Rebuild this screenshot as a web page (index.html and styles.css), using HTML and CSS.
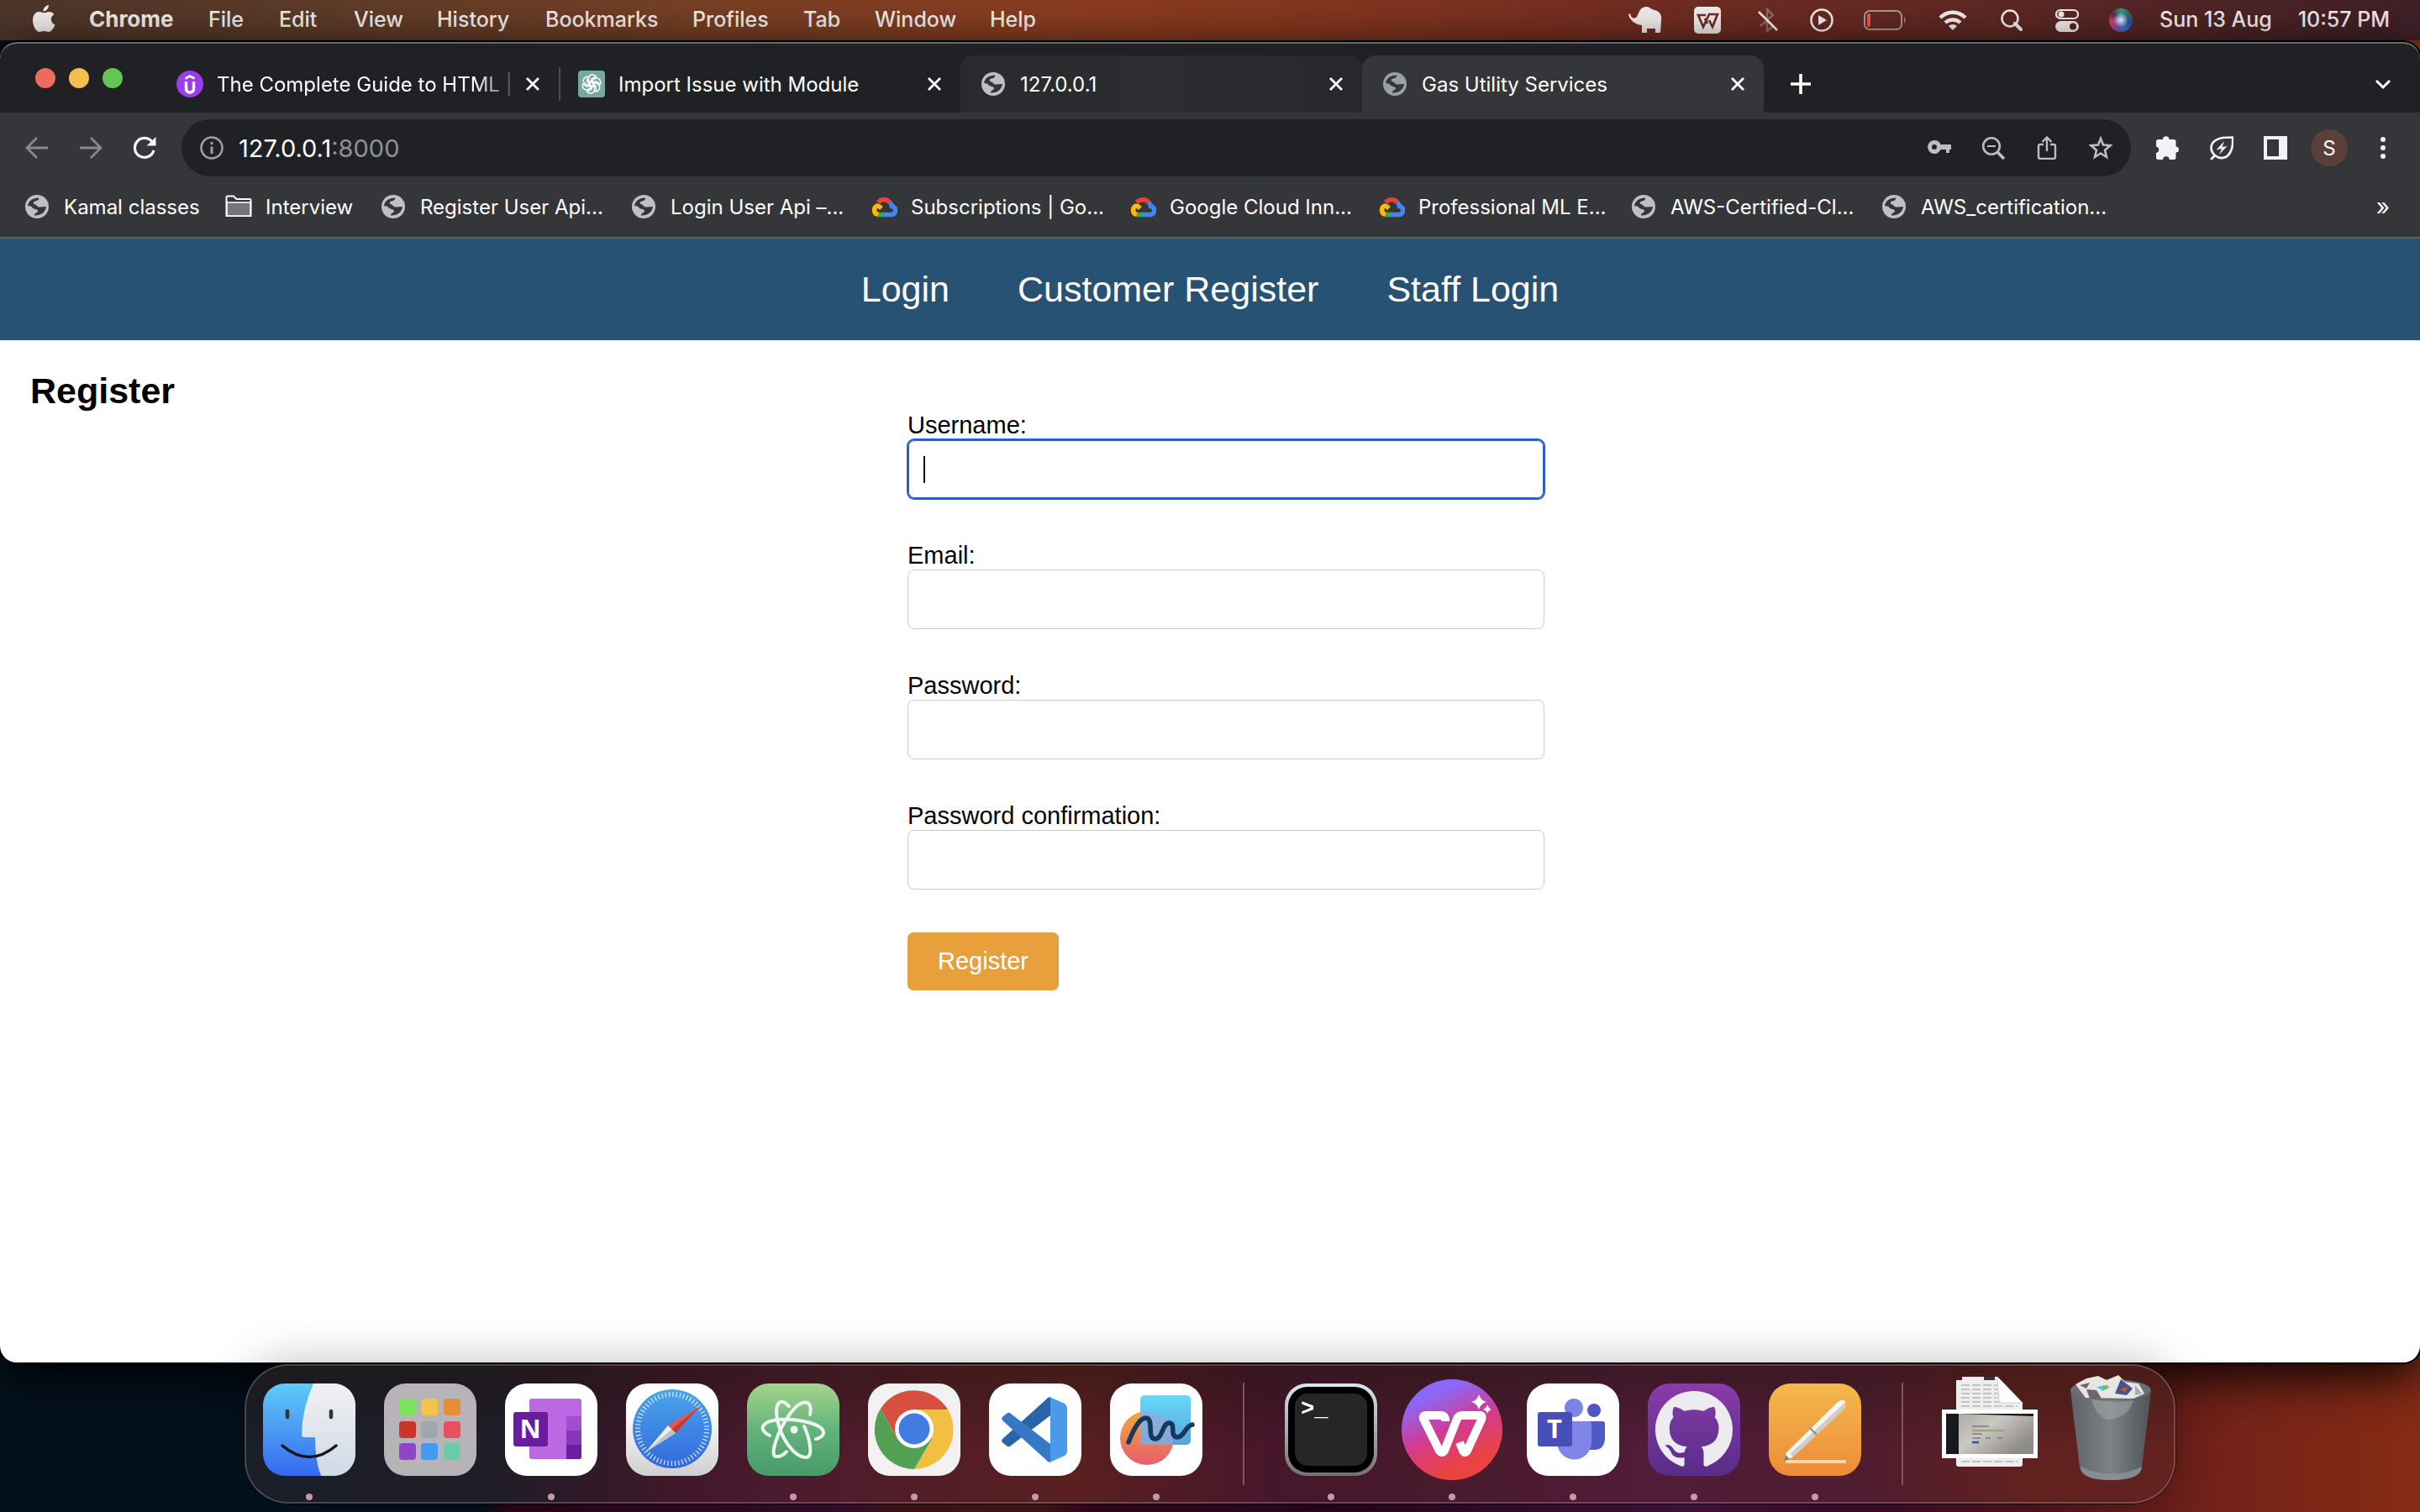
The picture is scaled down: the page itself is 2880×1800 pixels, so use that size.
FILE: index.html
```html
<!DOCTYPE html>
<html lang="en">
<head>
<meta charset="utf-8">
<title>Gas Utility Services</title>
<link rel="stylesheet" href="styles.css">
</head>
<body class="desktop">
<svg class="defs" width="0" height="0" aria-hidden="true">
  <defs>
    <symbol id="globe" viewBox="0 0 28 28">
      <circle cx="14" cy="14" r="14" fill="currentColor"/>
      <path class="globe-sea" d="M3 13C4 7 9 3.500 16 3.500C17 5 15 7 12 7.500C9 8 9 11 12 11.500C14 12 14 14.500 17 14.500L25 14C24.500 20 19 25 11 24.500C10.500 21.500 15 21.500 15 19C15 16.500 9 17.500 8 14.500C7 13 5 14 3 13Z"/>
    </symbol>
    <symbol id="cloud" viewBox="0 0 32 26">
      <path d="M9 8A9 9 0 0 1 23 8" fill="none" stroke="#ea4335" stroke-width="5.500"/>
      <path d="M23 8C25 10 25.500 11 25.500 12.500A5 5 0 0 1 24 22.500H16" fill="none" stroke="#4285f4" stroke-width="5.500"/>
      <path d="M16 22.500H9" fill="none" stroke="#34a853" stroke-width="5.500"/>
      <path d="M9 22.500A5.500 5.500 0 0 1 8 12C10 12 11 13 13 15" fill="none" stroke="#fbbc05" stroke-width="5.500"/>
    </symbol>
    <symbol id="close" viewBox="0 0 24 24">
      <path d="M5 5L19 19M19 5L5 19" stroke="currentColor" stroke-width="2.800" fill="none"/>
    </symbol>
  </defs>
</svg>

<header class="menubar">
  <svg class="apple" viewBox="0 0 28 34"><path fill="currentColor" d="M20 1C20 5 17 8.500 13.500 8.500C13 5 16.500 1.500 20 1ZM20.500 9C22.500 9 25 10 26.500 12C21 15.500 22 22 27.500 24.500C26 28.500 23 33 20 33C18 33 17 32 14.500 32C12 32 11 33 9 33C5 33 1 26 1 19C1 12 5 9 9 9C11.500 9 13 10.300 14.500 10.300C16 10.300 18 9 20.500 9Z"/></svg>
  <nav class="menus" aria-label="Menu bar">
    <b class="appname">Chrome</b><span>File</span><span>Edit</span><span>View</span><span>History</span><span>Bookmarks</span><span>Profiles</span><span>Tab</span><span>Window</span><span>Help</span>
  </nav>
  <div class="status">
    <svg width="40" height="32" viewBox="0 0 40 32"><path fill="currentColor" d="M0 9L2 8C3 14 7 15 10 12C12 9 13 0 21 0C25 0 27 3 31 4C37 5 40 10 39 16L38 31H32V26H22V31H16V22C7 21 1 15 0 9Z"/></svg>
    <svg width="32" height="32" viewBox="0 0 32 32"><rect width="32" height="32" rx="5" fill="currentColor"/><path d="M14 10H5L11 24L18 9H28L22 24L18 16M13 14L16 20" fill="none" stroke="#6d2b20" stroke-width="2.600"/></svg>
    <svg width="24" height="30" viewBox="0 0 24 30"><path d="M3 22L18 9L11 2V28L18 22L13 17" fill="none" stroke="currentColor" opacity=".3" stroke-width="2.500"/><path d="M1 5L23 27" stroke="currentColor" stroke-width="2.500"/></svg>
    <svg width="28" height="28" viewBox="0 0 28 28"><circle cx="14" cy="14" r="12.500" fill="none" stroke="currentColor" stroke-width="2.600"/><path d="M10 8L20 14L10 20Z" fill="currentColor"/></svg>
    <svg width="52" height="24" viewBox="0 0 52 24"><rect x="1" y="1" width="44" height="22" rx="6" fill="none" stroke="currentColor" opacity=".55" stroke-width="2"/><rect x="4" y="4" width="4" height="16" rx="2" fill="#ee5b4b"/><path d="M48 8Q51 12 48 16Z" fill="currentColor" opacity=".55"/></svg>
    <svg width="34" height="26" viewBox="0 0 34 26"><g fill="none" stroke="currentColor" stroke-width="4.500"><path d="M2 10A21 21 0 0 1 32 10"/><path d="M8 16A13 13 0 0 1 26 16"/></g><path d="M12 20A7 7 0 0 1 22 20L17 25Z" fill="currentColor"/></svg>
    <svg width="26" height="26" viewBox="0 0 26 26"><circle cx="11" cy="11" r="9.500" fill="none" stroke="currentColor" stroke-width="2.500"/><path d="M17 17L24 24" stroke="currentColor" stroke-width="4" stroke-linecap="round"/></svg>
    <svg width="28" height="28" viewBox="0 0 28 28"><rect x="1" y="2" width="26" height="10" rx="5" fill="none" stroke="currentColor" stroke-width="2.200"/><circle cx="7" cy="7" r="3.500" fill="currentColor"/><rect y="15" width="28" height="13" rx="6.500" fill="currentColor"/><circle cx="21" cy="21.500" r="4" fill="#552527"/></svg>
    <span class="siri"></span>
    <time class="clock"><span>Sun 13 Aug</span><span>10:57 PM</span></time>
  </div>
</header>

<section class="window">
  <div class="tabstrip">
    <div class="lights"><i class="light red"></i><i class="light amber"></i><i class="light green"></i></div>
    <div class="tab">
      <svg class="favicon" viewBox="0 0 32 32"><circle cx="16" cy="16" r="16" fill="#9b3dea"/><path d="M10.500 9.500L16 6.500L21.500 9.500" fill="none" stroke="#fff" stroke-width="2.800"/><path d="M11.500 13V21Q11.500 26 16 26Q20.500 26 20.500 21V13" fill="none" stroke="#fff" stroke-width="3.400"/></svg>
      <span class="tab-title fade">The Complete Guide to HTML |</span>
      <button class="icon-button close" aria-label="Close tab"><svg><use href="#close"/></svg></button>
    </div>
    <div class="tab divided">
      <svg class="favicon" viewBox="0 0 32 32"><rect width="32" height="32" rx="4" fill="#75a99c"/><g fill="none" stroke="#fff" stroke-width="1.500" stroke-linejoin="round"><path id="petal" d="M16 19.500L12.500 17.500V9.500Q13 5 17 5Q20 5 21.500 7L16 10V15"/><use href="#petal" transform="rotate(60 16 16)"/><use href="#petal" transform="rotate(120 16 16)"/><use href="#petal" transform="rotate(180 16 16)"/><use href="#petal" transform="rotate(240 16 16)"/><use href="#petal" transform="rotate(300 16 16)"/></g></svg>
      <span class="tab-title">Import Issue with Module</span>
      <button class="icon-button close" aria-label="Close tab"><svg><use href="#close"/></svg></button>
    </div>
    <div class="tab hovered">
      <svg class="favicon globe"><use href="#globe"/></svg>
      <span class="tab-title">127.0.0.1</span>
      <button class="icon-button close" aria-label="Close tab"><svg><use href="#close"/></svg></button>
    </div>
    <div class="tab active">
      <svg class="favicon globe muted"><use href="#globe"/></svg>
      <span class="tab-title">Gas Utility Services</span>
      <button class="icon-button close" aria-label="Close tab"><svg><use href="#close"/></svg></button>
    </div>
    <button class="icon-button newtab" aria-label="New tab"><svg viewBox="0 0 24 24"><path d="M12 0V24M0 12H24" stroke="currentColor" stroke-width="3.600"/></svg></button>
    <button class="icon-button tabsearch" aria-label="Search tabs"><svg viewBox="0 0 24 24"><path d="M4 8L12 16L20 8" fill="none" stroke="currentColor" stroke-width="3"/></svg></button>
  </div>

  <div class="toolbar">
    <button class="icon-button tool dim" aria-label="Back"><svg viewBox="0 0 28 28"><path d="M27 14H3M14 2L2 14L14 26" fill="none" stroke="currentColor" stroke-width="2.800"/></svg></button>
    <button class="icon-button tool dim" aria-label="Forward"><svg viewBox="0 0 28 28"><path d="M1 14H25M14 2L26 14L14 26" fill="none" stroke="currentColor" stroke-width="2.800"/></svg></button>
    <button class="icon-button tool" aria-label="Reload"><svg viewBox="0 0 28 28"><path d="M23.500 7.500A11.500 11.500 0 1 0 25 17" fill="none" stroke="currentColor" stroke-width="3.200"/><path d="M27.500 1V11.500H16.500Z" fill="currentColor"/></svg></button>
    <div class="omnibox">
      <svg class="info" viewBox="0 0 28 28"><circle cx="14" cy="14" r="12.500" fill="none" stroke="currentColor" stroke-width="2.600"/><path d="M14 12.500V21M14 7V10" stroke="currentColor" stroke-width="3"/></svg>
      <span class="url">127.0.0.1<span class="port">:8000</span></span>
      <button class="icon-button tool soft" aria-label="Passwords"><svg viewBox="0 0 28 28"><path fill="currentColor" fill-rule="evenodd" d="M8 5A8 8 0 1 0 15.500 16H22V20H26V16H28V10H15.500A8 8 0 0 0 8 5ZM8 10A3 3 0 1 1 8 16A3 3 0 1 1 8 10Z"/></svg></button>
      <button class="icon-button tool soft" aria-label="Zoom"><svg viewBox="0 0 28 28"><circle cx="12" cy="12" r="9.800" fill="none" stroke="currentColor" stroke-width="2.600"/><path d="M7 12H17" stroke="currentColor" stroke-width="2"/><path d="M19 19L27 27" stroke="currentColor" stroke-width="3.600"/></svg></button>
      <button class="icon-button tool soft" aria-label="Share"><svg viewBox="0 0 28 28"><path d="M10 10H6Q4 10 4 12V25Q4 27 6 27H22Q24 27 24 25V12Q24 10 22 10H18M14 18V2M8.500 7L14 1.500L19.500 7" fill="none" stroke="currentColor" stroke-width="2.400"/></svg></button>
      <button class="icon-button tool soft" aria-label="Bookmark this page"><svg viewBox="0 0 28 28"><path d="M14 3L17 10.500L25.500 11.200L19 16.700L21 25L14 20.500L7 25L9 16.700L2.500 11.200L11 10.500Z" fill="none" stroke="currentColor" stroke-width="2.600"/></svg></button>
    </div>
    <button class="icon-button tool" aria-label="Extensions"><svg viewBox="0 0 28 28"><path fill="currentColor" d="M8 4A3.500 3.500 0 0 1 15.500 4H21Q23.500 4 23.500 6.500V12.500A3.500 3.500 0 0 1 23.500 19.500V25.500Q23.500 28 21 28H15.700A3.800 3.800 0 0 0 8 28H2.500Q0 28 0 25.500V20A3.800 3.800 0 0 0 0 12.500V6.500Q0 4 2.500 4Z"/></svg></button>
    <button class="icon-button tool" aria-label="Energy saver"><svg viewBox="0 0 28 28"><path d="M27 1.500Q28 13 24 19.500C20 27 12 28 6 23C0 18 0 10 6 5.500C11 1.500 18 1.500 27 1.500ZM6 23L1 28" fill="none" stroke="currentColor" stroke-width="2.700"/><path d="M17 6L7.500 16.500L14 15L11 22L20.500 12L14.500 13Z" fill="currentColor"/></svg></button>
    <button class="icon-button tool" aria-label="Side panel"><svg viewBox="0 0 28 28"><path fill="currentColor" fill-rule="evenodd" d="M0 0H28V28H0ZM4 4V24H18V4Z"/></svg></button>
    <button class="icon-button tool" aria-label="Profile"><span class="avatar">S</span></button>
    <button class="icon-button tool" aria-label="Chrome menu"><svg viewBox="0 0 28 28"><g fill="currentColor"><circle cx="14" cy="4" r="3"/><circle cx="14" cy="14" r="3"/><circle cx="14" cy="24" r="3"/></g></svg></button>
  </div>

  <nav class="bookmarks" aria-label="Bookmarks">
    <a href="#"><svg class="bm globe"><use href="#globe"/></svg>Kamal classes</a>
    <a href="#"><svg class="bm" viewBox="0 0 32 28"><path d="M1.500 25V3Q1.500 1.500 3 1.500H10L13.500 5H29Q30.500 5 30.500 6.500V25Z" fill="none" stroke="#fff" stroke-width="2"/><rect x="2" y="9" width="28" height="16" fill="#75767a" stroke="#fff" stroke-width="1.500"/></svg>Interview</a>
    <a href="#"><svg class="bm globe"><use href="#globe"/></svg>Register User Api...</a>
    <a href="#"><svg class="bm globe"><use href="#globe"/></svg>Login User Api –...</a>
    <a href="#"><svg class="bm"><use href="#cloud"/></svg>Subscriptions | Go...</a>
    <a href="#"><svg class="bm"><use href="#cloud"/></svg>Google Cloud Inn...</a>
    <a href="#"><svg class="bm"><use href="#cloud"/></svg>Professional ML E...</a>
    <a href="#"><svg class="bm globe"><use href="#globe"/></svg>AWS-Certified-Cl...</a>
    <a href="#"><svg class="bm globe"><use href="#globe"/></svg>AWS_certification...</a>
    <button class="icon-button more" aria-label="More bookmarks">»</button>
  </nav>

  <main class="page">
    <nav class="sitenav" aria-label="Site">
      <a href="#">Login</a>
      <a href="#">Customer Register</a>
      <a href="#">Staff Login</a>
    </nav>
    <div class="content">
      <h2 class="heading">Register</h2>
      <form class="form">
        <div class="field"><label for="username">Username:</label><div class="caret-box"><input class="focused" id="username" type="text"><i class="caret"></i></div></div>
        <div class="field"><label for="email">Email:</label><input id="email" type="email"></div>
        <div class="field"><label for="password1">Password:</label><input id="password1" type="password"></div>
        <div class="field"><label for="password2">Password confirmation:</label><input id="password2" type="password"></div>
        <button class="submit" type="button">Register</button>
      </form>
    </div>
  </main>
</section>

<footer class="dock">
  <div class="app running">
    <svg viewBox="0 0 110 110"><defs><linearGradient id="finderBlue" x2="0" y2="1"><stop stop-color="#5fcbf9"/><stop offset="1" stop-color="#3569ee"/></linearGradient><linearGradient id="finderGrey" x2="0" y2="1"><stop stop-color="#f1f1f3"/><stop offset="1" stop-color="#d0d9e6"/></linearGradient><clipPath id="tile"><rect width="110" height="110" rx="26"/></clipPath></defs>
      <g clip-path="url(#tile)"><rect width="110" height="110" fill="url(#finderBlue)"/><path d="M60 0Q46 32 46 61Q46 64 49 64H62Q62 92 69 110H110V0Z" fill="url(#finderGrey)"/></g>
      <path d="M29 33V40M81 33V40" stroke="#333" stroke-width="4.500" stroke-linecap="round"/><path d="M23 74Q55 101 87 74" fill="none" stroke="#171717" stroke-width="3.500" stroke-linecap="round"/></svg>
  </div>
  <div class="app">
    <svg viewBox="0 0 110 110"><rect width="110" height="110" rx="26" fill="#b7b4b8"/>
      <rect x="18" y="18" width="20" height="20" rx="4" fill="#7ae45c"/><rect x="44" y="18" width="20" height="20" rx="4" fill="#f4c446"/><rect x="71" y="18" width="20" height="20" rx="4" fill="#e58e38"/>
      <rect x="18" y="45" width="20" height="20" rx="4" fill="#cb3527"/><rect x="44" y="45" width="20" height="20" rx="4" fill="#a1a6aa"/><rect x="71" y="45" width="20" height="20" rx="4" fill="#e94f5f"/>
      <rect x="18" y="71" width="20" height="20" rx="4" fill="#9044c6"/><rect x="44" y="71" width="20" height="20" rx="4" fill="#429bf2"/><rect x="71" y="71" width="20" height="20" rx="4" fill="#6bcba9"/></svg>
  </div>
  <div class="app running">
    <svg viewBox="0 0 110 110"><rect width="110" height="110" rx="26" fill="#fff"/><rect x="29" y="18" width="62" height="72" rx="3" fill="#bb68e3"/><path d="M73 39H91V56H73Z" fill="#9f4fd0"/><path d="M73 56H91V73H73Z" fill="#8737ba"/><path d="M73 73H91V87Q91 90 88 90H73Z" fill="#6a1fa2"/><rect x="10" y="34" width="41" height="41" rx="3" fill="#6a1c9f"/><text x="30" y="65" class="glyph" text-anchor="middle">N</text></svg>
  </div>
  <div class="app">
    <svg viewBox="0 0 110 110"><defs><linearGradient id="paper" x2="0" y2="1"><stop offset=".3" stop-color="#fff"/><stop offset="1" stop-color="#cfcfcf"/></linearGradient><linearGradient id="sky" x2="0" y2="1"><stop stop-color="#4aa6ea"/><stop offset="1" stop-color="#3268de"/></linearGradient></defs><rect width="110" height="110" rx="26" fill="url(#paper)"/><circle cx="55" cy="54" r="47" fill="url(#sky)"/><circle cx="55" cy="54" r="41" fill="none" stroke="#dcebfa" stroke-width="6" stroke-dasharray="1.200 3.094"/><path d="M88 27L50 50L59 59Z" fill="#e8584c"/><path d="M23 82L50 50L59 59Z" fill="#eee"/><path d="M88 27L54.500 54.500L59 59Z" fill="#c03b31"/><path d="M23 82L54.500 54.500L59 59Z" fill="#bfc3c8"/></svg>
  </div>
  <div class="app running">
    <svg viewBox="0 0 110 110"><defs><linearGradient id="leaf" x2="0" y2="1"><stop stop-color="#a5d48d"/><stop offset=".5" stop-color="#62b37c"/><stop offset="1" stop-color="#489a68"/></linearGradient></defs><rect width="110" height="110" rx="26" fill="url(#leaf)"/><g fill="none" stroke="#edf6ef" stroke-width="4" stroke-linecap="round"><path d="M27 62C12 54 18 45 38 43C62 41 92 49 91 59C91 62 87 65 82 66"/><path d="M50 27C38 15 33 25 36 43C41 67 57 88 70 88C80 88 74 64 68 51"/><path d="M75 37C79 16 63 20 52 35C36 56 26 88 35 87C39 87 44 85 47 81"/></g><circle cx="56" cy="55" r="4.500" fill="#edf6ef"/></svg>
  </div>
  <div class="app running">
    <svg viewBox="0 0 110 110"><rect width="110" height="110" rx="26" fill="#f4f1f2"/><path d="M15 30A47 47 0 0 1 95 31H55V54L35 66Z" fill="#d84f3f"/><path d="M95 31A47 47 0 0 1 55 102L76 66L55 54V31Z" fill="#f2bf42"/><path d="M15 30A47 47 0 0 0 55 102L76 66L55 54L35 66Z" fill="#52a155"/><circle cx="55" cy="54" r="23" fill="#fff"/><circle cx="55" cy="54" r="18.500" fill="#437be5"/></svg>
  </div>
  <div class="app running">
    <svg viewBox="0 0 110 110"><rect width="110" height="110" rx="26" fill="#fff"/><path d="M16 66Q14 69 17 71L22 75Q24 76 26 74L73 38V16Q70 16 68 19Z" fill="#2a64a8"/><path d="M16 44Q14 41 17 39L22 35Q24 34 26 36L73 72V94Q70 94 68 91Z" fill="#3478c6"/><path d="M72 16L90 24Q93 26 93 29V81Q93 84 90 86L72 94Q73 92 73 88V22Q73 18 72 16Z" fill="#4a9aec"/></svg>
  </div>
  <div class="app running">
    <svg viewBox="0 0 110 110"><defs><linearGradient id="sun" x2="0" y2="1"><stop stop-color="#f0a93a"/><stop offset="1" stop-color="#ea5c6c"/></linearGradient><linearGradient id="pane" x2="0" y2="1"><stop stop-color="#67dafa"/><stop offset="1" stop-color="#58a2d6"/></linearGradient></defs><rect width="110" height="110" rx="26" fill="#fff"/><circle cx="44" cy="65" r="32" fill="url(#sun)"/><rect x="36" y="14" width="60" height="59" rx="5" fill="url(#pane)"/><path d="M36 35Q70 31 75 65Q75 70 74 73H41Q36 73 36 68Z" fill="#9aa8d6" opacity=".7"/><path d="M22 70C30 50 36 41 43 41C53 42 43 66 54 66C63 66 62 46 71 47C79 48 70 63 80 64C88 64 90 50 98 49" fill="none" stroke="#15395c" stroke-width="5.500" stroke-linecap="round"/></svg>
  </div>
  <hr class="rule">
  <div class="app running">
    <svg viewBox="0 0 110 110"><defs><linearGradient id="bezel" x2="0" y2="1"><stop stop-color="#d5e8f0"/><stop offset="1" stop-color="#77706f"/></linearGradient></defs><rect width="110" height="110" rx="26" fill="url(#bezel)"/><rect x="4" y="4" width="102" height="102" rx="23" fill="#000"/><rect x="12" y="12" width="86" height="86" rx="15" fill="#262626"/><text x="19" y="38" class="prompt">&gt;_</text></svg>
  </div>
  <div class="app running">
    <svg viewBox="0 0 110 110"><defs><linearGradient id="wps" x1=".25" x2=".7" y2="1"><stop offset=".15" stop-color="#8b68f6"/><stop offset=".5" stop-color="#d43a90"/><stop offset=".85" stop-color="#ea4340"/></linearGradient></defs><circle cx="55" cy="55" r="60" fill="url(#wps)"/><path d="M47 45V42Q46 38 42 38H24Q20 38 21 42L40 80Q43 84 46 80L61 42Q63 38 67 38H88Q92 38 90 43L73 80Q70 84 68 80L64 70" fill="none" stroke="#fff" stroke-width="10" stroke-linejoin="round"/><path d="M87 13Q89 20 96 22Q89 24 87 31Q85 24 78 22Q85 20 87 13ZM97 25Q98 29 102 31Q98 32 97 36Q96 32 92 31Q96 29 97 25Z" fill="#fff"/></svg>
  </div>
  <div class="app running">
    <svg viewBox="0 0 110 110"><rect width="110" height="110" rx="26" fill="#fff"/><circle cx="80" cy="32" r="8" fill="#4f58c0"/><path d="M70 45H90Q93 45 93 48V64Q93 79 80 79H70Z" fill="#5059c4"/><circle cx="56" cy="29" r="11" fill="#7b83e8"/><path d="M36 45H74Q77 45 77 48V70A20 20 0 0 1 36 70Z" fill="#7f86e6"/><rect x="13" y="34" width="41" height="41" rx="3" fill="#464eb8"/><text x="33" y="65" class="glyph" text-anchor="middle">T</text></svg>
  </div>
  <div class="app running">
    <svg viewBox="0 0 110 110"><defs><linearGradient id="grape" x2="0" y2="1"><stop stop-color="#8a3bab"/><stop offset="1" stop-color="#572d86"/></linearGradient></defs><rect width="110" height="110" rx="26" fill="url(#grape)"/><path transform="translate(9 9) scale(5.750)" fill="#ebebf1" d="M8 0C3.580 0 0 3.580 0 8c0 3.540 2.290 6.530 5.470 7.590.4.070.55-.17.55-.38 0-.19-.01-.82-.01-1.490-2.010.37-2.530-.49-2.690-.94-.09-.23-.48-.94-.82-1.130-.28-.15-.68-.52-.01-.53.63-.01 1.080.58 1.230.82.72 1.210 1.870.87 2.330.66.07-.52.28-.87.51-1.070-1.780-.2-3.640-.89-3.640-3.950 0-.87.31-1.590.82-2.150-.08-.2-.36-1.020.08-2.120 0 0 .67-.21 2.200.82.64-.18 1.320-.27 2-.27s1.360.09 2 .27c1.530-1.040 2.200-.82 2.200-.82.44 1.100.16 1.920.08 2.120.51.56.82 1.270.82 2.150 0 3.070-1.870 3.750-3.650 3.950.29.25.54.73.54 1.480 0 1.070-.01 1.930-.01 2.200 0 .21.15.46.55.38A8.010 8.010 0 0 0 16 8c0-4.420-3.580-8-8-8Z"/></svg>
  </div>
  <div class="app running">
    <svg viewBox="0 0 110 110"><defs><linearGradient id="amber" x2="0" y2="1"><stop stop-color="#f4b94c"/><stop offset="1" stop-color="#ed8b39"/></linearGradient></defs><rect width="110" height="110" rx="26" fill="url(#amber)"/><path d="M20 91H92V95H20Z" fill="#fbd7a8"/><path d="M17 93L21 82L82 22Q88 18 91 21Q92 25 89 31L28 88Z" fill="#f7f5f3"/><path d="M28 88L89 31Q91 27 91 22L26 83Z" fill="#cfccca"/><path d="M49 53L57 61" stroke="#8c8884" stroke-width="2"/><path d="M17 93L20 85L25 90Z" fill="#8c8274"/></svg>
  </div>
  <hr class="rule">
  <div class="app">
    <svg viewBox="0 0 110 110"><defs><linearGradient id="photo" x2="1" y2=".6"><stop stop-color="#a5a39f"/><stop offset=".5" stop-color="#cbc8c4"/><stop offset="1" stop-color="#8f8c88"/></linearGradient></defs><path d="M22 -8H64L94 23V96Q94 99 91 99H18Q15 99 15 96V-4H22Z" fill="#eeeeee"/><path d="M21 2H64M21 7H64M21 12H64M21 17H64M21 22H66M21 27H88M21 93H88" stroke="#c4c4c4" stroke-width="2" stroke-dasharray="10 3"/><path d="M48 -6H61" stroke="#333" stroke-width="4"/><path d="M64 -8L94 23H69Q66 23 66 20Z" fill="#fff" stroke="#ccc"/><rect x="-2" y="31" width="114" height="58" fill="#fff"/><rect x="3" y="36" width="104" height="48" fill="url(#photo)"/><path d="M3 36H18V84H3ZM18 36H107V39Z" fill="#17191c"/><path d="M34 51H54M34 65H44M50 65H56M64 65H70M34 60H46" stroke="#7d7c79" stroke-width="1.500"/><path d="M34 56H72" stroke="#91a97c" stroke-width="2.500"/><path d="M34 70H42" stroke="#27549e" stroke-width="2.500"/></svg>
  </div>
  <div class="app">
    <svg viewBox="0 0 110 110"><defs><linearGradient id="bin"><stop stop-color="#5f6467"/><stop offset=".5" stop-color="#7c8285"/><stop offset="1" stop-color="#4e5356"/></linearGradient></defs><ellipse cx="55" cy="8" rx="48" ry="13" fill="#6b6f73"/><path d="M13 1L26 -6L40 -9L50 -4L64 -10L72 -2L88 0L95 12L82 18L25 17Z" fill="#e7e6e4"/><path d="M60 12L67 -5L81 6L74 14Z" fill="#46538f"/><path d="M66 6L76 4L72 11Z" fill="#b85a2c"/><path d="M38 4L52 2L46 9Z" fill="#52bfd8"/><path d="M46 2L54 4L48 8Z" fill="#79b64b"/><path d="M26 7L38 8L44 18H30ZM18 2L30 -1L26 6Z" fill="#6b6867"/><path d="M84 2L92 12L84 14Z" fill="#aaa"/><path d="M7 8Q12 20 55 20Q98 20 103 8L92 100Q91 115 55 115Q20 115 18 100Z" fill="url(#bin)"/><path d="M19 99Q55 116 92 99Q91 115 55 115Q21 115 19 99Z" fill="#8d9498" opacity=".8"/><path d="M32 19Q60 24 82 20Q76 42 50 43Q36 36 32 19Z" fill="#a5abae" opacity=".5"/></svg>
  </div>
</footer>
</body>
</html>
```

FILE: styles.css
```css
* { box-sizing: border-box; }

html, body { height: 100%; }

body { margin: 0; }

.desktop {
  display: flex;
  flex-direction: column;
  min-height: 100%;
  overflow: hidden;
  font-family: Inter, "Liberation Sans", sans-serif;
  background: linear-gradient(90deg, #04111d 0%, #04111d 20%, #2a0418 21%, #3a0d2e 35%, #45131a 37%, #4a1518 43%, #38051e 45%, #2c0520 56%, #48133c 70%, #400a2a 77%, #561420 84%, #742318 92%, #862b15 100%);
}

.defs { position: absolute; }

/* macOS menu bar */
.menubar {
  display: flex;
  align-items: center;
  height: 48px;
  padding: 0 36px 0 38px;
  color: #f3eeec;
  font-size: 25px;
  font-weight: 500;
  line-height: 30px;
  white-space: nowrap;
  background: linear-gradient(90deg, #4d352a 0%, #5d3b28 13%, #783f24 30%, #8b3d20 44%, #83361f 55%, #712c21 68%, #5a2724 85%, #3e2028 100%);
}

.apple { width: 28px; height: 34px; margin: 0 40px 4px 0; }

.menus {
  display: grid;
  grid-template-columns: 142px 84px 89px 99px 129px 175px 132px 85px 137px auto;
  margin-bottom: 2px;
}

.appname { font-size: 26px; }

.status {
  display: grid;
  grid-template-columns: 68px 80px 64px 64px 88px 72px 68px 64px 64px 288px;
  align-items: center;
  justify-items: center;
  margin-left: auto;
}

.siri {
  width: 28px;
  height: 28px;
  border-radius: 50%;
  background: radial-gradient(circle, #fff 0, #9fb8e8 20%, transparent 45%), conic-gradient(#3c9a7c, #37696c, #2d4b9a, #3672c9, #7a4fa8, #d2426e, #5d3145, #3c9a7c);
}

.clock {
  display: flex;
  justify-content: space-between;
  width: 100%;
  margin-bottom: 2px;
  padding-left: 14px;
}

/* Browser window */
.window {
  display: flex;
  flex: 1;
  flex-direction: column;
  margin: 2px 0;
  overflow: hidden;
  border-top: 2px solid #66686b;
  border-radius: 20px;
  color: #fff;
  background: #fff;
  box-shadow: 0 14px 60px #000, 0 0 0 2px #000;
}

.icon-button {
  display: flex;
  align-items: center;
  justify-content: center;
  padding: 0;
  border: 0;
  color: inherit;
  font: inherit;
  background: none;
}

.tabstrip {
  display: flex;
  align-items: flex-end;
  height: 82px;
  font-size: 24px;
  background: #202124;
}

.lights { display: flex; gap: 16px; align-self: center; width: 187px; padding-left: 42px; }

.light { width: 24px; height: 24px; border-radius: 50%; }
.red { background: #ed6a5e; }
.amber { background: #f5bf4f; }
.green { background: #62c554; }

.tab {
  display: flex;
  align-items: center;
  width: 478px;
  height: 68px;
  padding: 0 19px 0 23px;
  border-radius: 16px 16px 0 0;
}

.divided {
  height: 40px;
  margin-bottom: 14px;
  padding-left: 21px;
  border-left: 2px solid #4a4c50;
  border-radius: 0;
}

.hovered { background: linear-gradient(90deg, #292a2d, #2c2d30 50%, #27282b); }
.active { background: #35363a; }

.favicon { flex: none; width: 32px; height: 32px; margin-right: 16px; }

.globe { padding: 2px; color: #bdc1c6; }
.muted { color: #9aa0a6; }
.globe-sea { fill: #35363a; }

.tab-title { flex: 1; white-space: nowrap; }
.fade { mask-image: linear-gradient(90deg, #000 84%, transparent 100%); }

.close svg { width: 24px; height: 24px; }
.newtab { width: 88px; height: 68px; }
.newtab svg { width: 24px; height: 24px; }
.tabsearch { width: 64px; height: 68px; margin: 0 12px 0 auto; }
.tabsearch svg { width: 24px; height: 24px; }

.toolbar {
  display: flex;
  align-items: center;
  height: 76px;
  padding: 8px 12px 0;
  color: #f1f3f4;
  background: #35363a;
}

.tool { flex: none; width: 64px; height: 64px; }
.tool svg { width: 28px; height: 28px; }
.dim { color: #88898c; }
.soft { color: #bdbebf; }

.omnibox {
  display: flex;
  flex: 1;
  align-items: center;
  height: 68px;
  margin: 0 12px;
  padding: 0 4px 0 22px;
  border-radius: 34px;
  background: #202124;
}

.info { width: 28px; height: 28px; margin-right: 18px; color: #9aa0a6; }

.url { flex: 1; color: #fff; font-size: 29px; }
.port { color: #8f9194; }

.avatar {
  display: flex;
  align-items: center;
  justify-content: center;
  width: 44px;
  height: 44px;
  border-radius: 50%;
  color: #fff;
  font-size: 24px;
  background: #5a4038;
}

.bookmarks {
  display: grid;
  grid-template-columns: 240px 184px 298px 286px 308px 296px 300px 298px auto 64px;
  align-items: center;
  height: 74px;
  padding: 0 12px 0 28px;
  border-bottom: 2px solid #5f6063;
  font-size: 24px;
  white-space: nowrap;
  background: #35363a;
}

.bookmarks a { display: flex; align-items: center; gap: 16px; color: #fff; text-decoration: none; }
.bm { width: 32px; height: 32px; }
.more { font-size: 28px; }

/* Web page */
.page { flex: 1; color: #000; font-family: "Liberation Sans", Arial, sans-serif; }

.sitenav {
  display: flex;
  align-items: center;
  justify-content: center;
  gap: 81px;
  height: 121px;
  font-size: 43px;
  background: #275273;
}

.sitenav a { color: #fff; text-decoration: none; }

.content { padding: 36px; }

.heading { margin: 0; font-size: 43px; line-height: 49px; }

.form { max-width: 720px; margin: 0 auto; font-size: 29px; }

.field { margin-bottom: 51px; }

.field label { display: block; line-height: 33px; }

.field input {
  display: block;
  width: calc(100% + 38px);
  height: 71px;
  padding: 16px 18px;
  border: 1px solid #ccc;
  border-radius: 8px;
  outline: 0;
  font: inherit;
  background: #fff;
}

.field .focused { border: 1px solid #2a5fca; box-shadow: 0 0 0 1px #2a5fca, inset 0 0 0 1px #2a5fca; }

.caret-box { position: relative; }

.caret { position: absolute; top: 20px; left: 19px; width: 2px; height: 32px; background: #000; }

.submit {
  height: 69px;
  padding: 0 36px;
  border: 0;
  border-radius: 7px;
  color: #fff;
  font: inherit;
  background: #e8a03c;
}

/* Dock */
.dock {
  display: flex;
  align-self: center;
  height: 166px;
  margin-bottom: 10px;
  padding: 0 3px;
  border: 2px solid #ffffff30;
  border-radius: 52px;
  background: linear-gradient(#1c120c60, transparent 60%) border-box, linear-gradient(90deg, #1a1f29 0%, #1f1d28 13%, #3f1728 22%, #4a1a2e 27%, #5a2020 43%, #46162a 53%, #481a2c 62%, #501c38 72%, #501c30 84%, #60211f 92%, #622320 100%) border-box;
  box-shadow: 0 0 56px #00000045, 0 0 0 1px #000000a0;
}

.app {
  display: flex;
  flex-direction: column;
  align-items: center;
  gap: 21px;
  width: 144px;
  padding-top: 21px;
}

.app svg { width: 110px; height: 110px; overflow: visible; }

.running::after { content: ""; width: 8px; height: 8px; border-radius: 50%; background: #c698a9; }

.rule { width: 2px; height: 122px; margin: 20px 31px; border: 0; background: #80535f; }

.glyph { fill: #fff; font: bold 31px "Open Sans", sans-serif; }
.prompt { fill: #fff; font: bold 27px "Liberation Mono", monospace; }
```
